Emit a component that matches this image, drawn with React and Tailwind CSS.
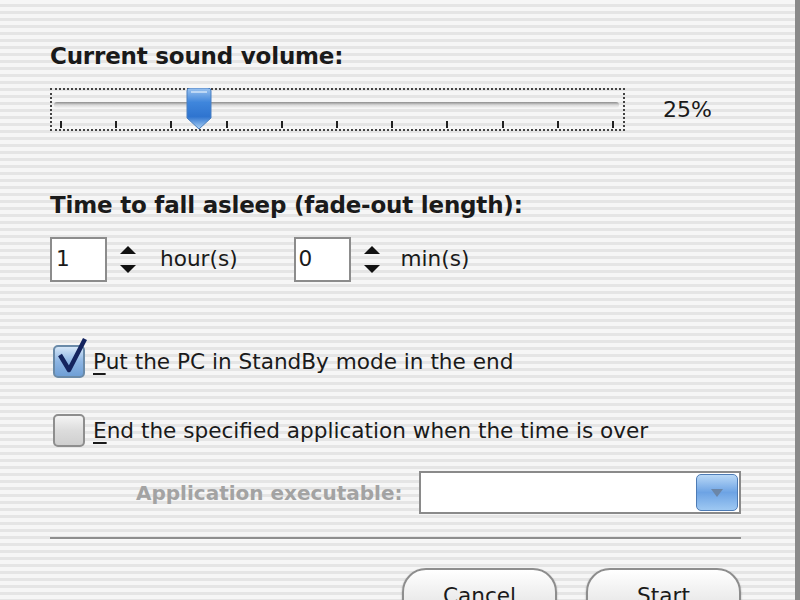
export default function App() {
  const ticks = Array.from({ length: 11 });
  return (
    <div className="w-[800px] h-[600px] overflow-hidden flex bg-[#f2f2f2] font-['DejaVu_Sans',sans-serif] text-[#1a1a1a]">
      <div className="flex-1 h-full pl-[50px] pr-[54px] pt-[42px] [background-image:repeating-linear-gradient(180deg,#f6f6f6_0px,#f6f6f6_4px,#e5e5e5_4px,#e5e5e5_7px)]">
        <h2 className="text-[23px] leading-[28px] font-bold tracking-[-0.2px]">Current sound volume:</h2>

        <div className="flex items-center mt-[18px]">
          <div className="relative w-[575px] h-[43px] border-2 border-dotted border-[#444]">
            <div className="absolute left-[2px] right-[4px] top-[12px] h-[6px] rounded-sm bg-gradient-to-b from-[#8d8d8d] via-[#d9d9d9] to-[#f5f5f5]" />
            <div className="absolute left-[8px] right-[9px] bottom-[1px] flex justify-between items-end">
              {ticks.map((_, i) => (
                <span key={i} className="w-[2px] h-[7px] bg-[#222]" />
              ))}
            </div>
            <svg className="absolute left-[134px] top-[-2px]" width="26" height="42" viewBox="0 0 26 42">
              <defs>
                <linearGradient id="th" x1="0" y1="0" x2="0" y2="1">
                  <stop offset="0" stopColor="#9cc3ef" />
                  <stop offset="0.35" stopColor="#3f86dc" />
                  <stop offset="0.7" stopColor="#2f74cf" />
                  <stop offset="1" stopColor="#a9d1f5" />
                </linearGradient>
              </defs>
              <path d="M1 3 Q1 0 4 0 L22 0 Q25 0 25 3 L25 30 L13 41 L1 30 Z" fill="url(#th)" stroke="#4a7fbf" strokeWidth="1" />
              <path d="M5 4 L21 4" stroke="#d6e8fb" strokeWidth="2" opacity="0.7" />
            </svg>
          </div>
          <span className="ml-[38px] text-[22px] leading-[26px]">25%</span>
        </div>

        <h2 className="mt-[60px] text-[23px] leading-[28px] font-bold tracking-[-0.2px]">Time to fall asleep (fade-out length):</h2>

        <div className="flex items-center mt-[18px] text-[21.6px]">
          <div className="w-[57px] h-[45px] bg-white border-2 border-[#8c8c8c] pl-[4px] pt-[6px] leading-[28px]">1</div>
          <Spinner />
          <span className="ml-[21px]">hour(s)</span>
          <div className="ml-[56px] w-[57px] h-[45px] bg-white border-2 border-[#8c8c8c] pl-[3px] pt-[6px] leading-[28px]">0</div>
          <Spinner />
          <span className="ml-[18px]">min(s)</span>
        </div>

        <div className="flex items-center mt-[63px] text-[21.6px] leading-[33px]">
          <CheckBox checked />
          <span className="ml-[8px]"><span className="underline underline-offset-4">P</span>ut the PC in StandBy mode in the end</span>
        </div>

        <div className="flex items-center mt-[36px] text-[21.6px] leading-[33px]">
          <CheckBox />
          <span className="ml-[8px]"><span className="underline underline-offset-4">E</span>nd the specified application when the time is over</span>
        </div>

        <div className="flex items-center mt-[24px]">
          <span className="ml-[86px] shrink-0 whitespace-nowrap text-[20px] leading-[26px] font-bold text-[#a3a3a3]">Application executable:</span>
          <div className="ml-auto shrink-0 w-[322px] h-[43px] bg-white border-2 border-[#8a8a8a] flex items-center justify-end pr-[1px]">
            <div className="w-[42px] h-[37px] rounded-[5px] border border-[#4d7bb5] bg-gradient-to-b from-[#b9d8f6] via-[#6da3e4] to-[#9ec8f2] flex items-center justify-center">
              <svg width="16" height="12" viewBox="0 0 16 12">
                <path d="M2 2 L14 2 L8 10 Z" fill="#6b86a8" />
              </svg>
            </div>
          </div>
        </div>

        <div className="mt-[23px] h-[3px] bg-[#8f8f8f] border-b border-[#fafafa]" />

        <div className="flex justify-end gap-[29px] mt-[28px]">
          <AquaButton label="Cancel" />
          <AquaButton label="Start" />
        </div>
      </div>
      <div className="w-[5px] h-full bg-[#8a8a8a]" />
    </div>
  );
}

function Spinner() {
  return (
    <div className="ml-[10px] w-[22px] h-[45px] flex flex-col items-center justify-center gap-[9px]">
      <svg width="18" height="10" viewBox="0 0 18 10"><path d="M1 9 L9 1 L17 9 Z" fill="#111" /></svg>
      <svg width="18" height="10" viewBox="0 0 18 10"><path d="M1 1 L17 1 L9 9 Z" fill="#111" /></svg>
    </div>
  );
}

function CheckBox({ checked }) {
  return (
    <div className="relative ml-[3px] w-[32px] h-[33px] shrink-0">
      <div
        className={
          checked
            ? "w-full h-full rounded-[5px] border-2 border-[#6a8aa8] bg-gradient-to-b from-[#d5e6f7] via-[#8db5e3] to-[#6f9fd6]"
            : "w-full h-full rounded-[5px] border-2 border-[#8e8e8e] bg-gradient-to-b from-[#f4f4f4] via-[#dcdcdc] to-[#cfcfcf]"
        }
      />
      {checked && (
        <svg className="absolute left-[4px] top-[-8px]" width="32" height="38" viewBox="0 0 32 38">
          <path d="M3 18 L12 33 L28 2" fill="none" stroke="#14245e" strokeWidth="4.5" strokeLinejoin="round" />
        </svg>
      )}
    </div>
  );
}

function AquaButton({ label }) {
  return (
    <div className="w-[155px] h-[60px] rounded-[24px] border-2 border-[#8d8d8d] bg-gradient-to-b from-[#ffffff] via-[#ececec] to-[#d6d6d6] shadow-[0_1px_2px_rgba(0,0,0,0.3)] flex justify-center pt-[10px] text-[21.6px]">
      {label}
    </div>
  );
}
